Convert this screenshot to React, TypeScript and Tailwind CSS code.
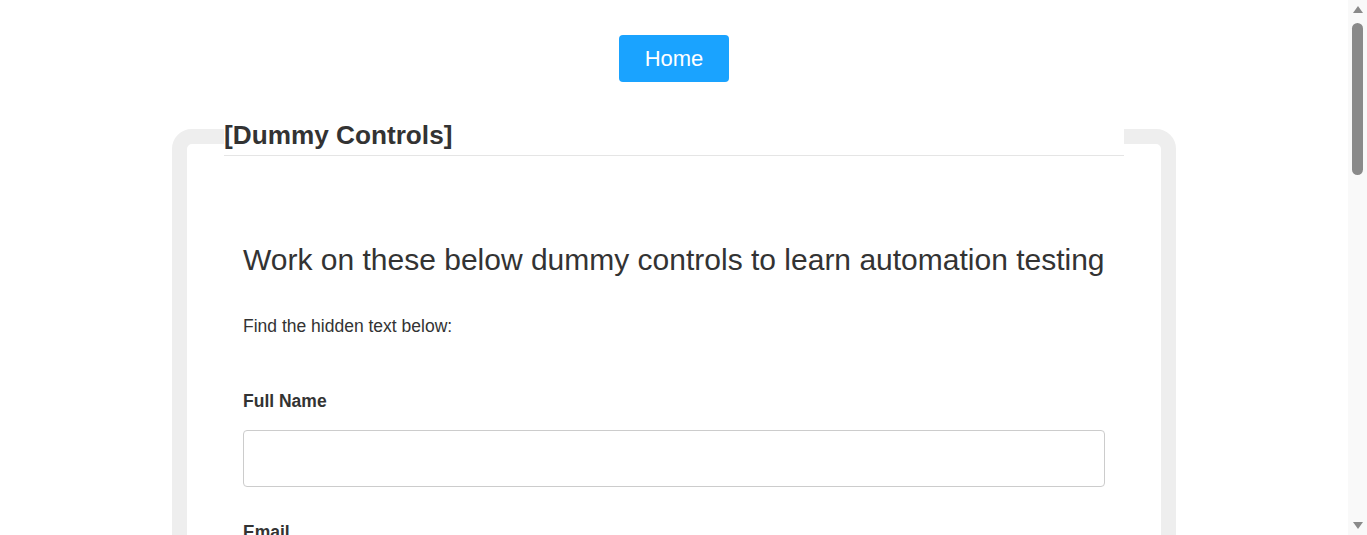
function ScrollBar() {
  return (
    <aside className="flex h-[535px] w-[19px] shrink-0 flex-col items-center bg-[#f9f9f9]">
      <svg className="mt-[5px]" width="12" height="9" viewBox="0 0 12 9">
        <path d="M6 1 L11 8 L1 8 Z" fill="#8a8a8a" />
      </svg>
      <div className="mt-[9px] h-[152px] w-[11px] rounded-full bg-[#8a8a8a]" />
      <div className="flex-1" />
      <svg className="mb-[5px]" width="12" height="9" viewBox="0 0 12 9">
        <path d="M1 1 L11 1 L6 8 Z" fill="#8a8a8a" />
      </svg>
    </aside>
  );
}

function Field({ label, first }: { label: string; first?: boolean }) {
  return (
    <>
      <label className={`${first ? "mt-[51px]" : "mt-[33px]"} block text-[17.5px] leading-[24px] font-bold`}>{label}</label>
      <input className="mt-[17px] block h-[57px] w-full rounded border border-[#cccccc] px-3" />
    </>
  );
}

export default function App() {
  const font = { fontFamily: '"Liberation Sans", Arial, sans-serif' };
  return (
    <div className="flex h-[535px] overflow-hidden bg-white text-[#333]" style={font}>
      <main className="flex-1">
        <div className="flex justify-center pt-[35px]">
          <button className="h-[47px] w-[110px] rounded bg-[#1aa3ff] text-[22px] text-white">
            Home
          </button>
        </div>

        <div className="mt-[35px] flex justify-center">
          <fieldset className="w-[1004px] rounded-[20px] border-[15px] border-[#eeeeee] px-[37px] pb-10">
            <legend className="w-[900px] border-b border-[#e5e5e5] pt-[3px] pb-[5px] text-[26.2px] font-bold leading-[30px]">
              [Dummy Controls]
            </legend>

            <div className="px-[19px] pt-[86px]">
              <h2 className="text-[30px] leading-[36px]">
                Work on these below dummy controls to learn automation testing
              </h2>
              <p className="mt-[36px] text-[17.5px] leading-[24px]">Find the hidden text below:</p>

              <Field label="Full Name" first />
              <Field label="Email" />
              <Field label="Password" />
            </div>
          </fieldset>
        </div>
      </main>
      <ScrollBar />
    </div>
  );
}
